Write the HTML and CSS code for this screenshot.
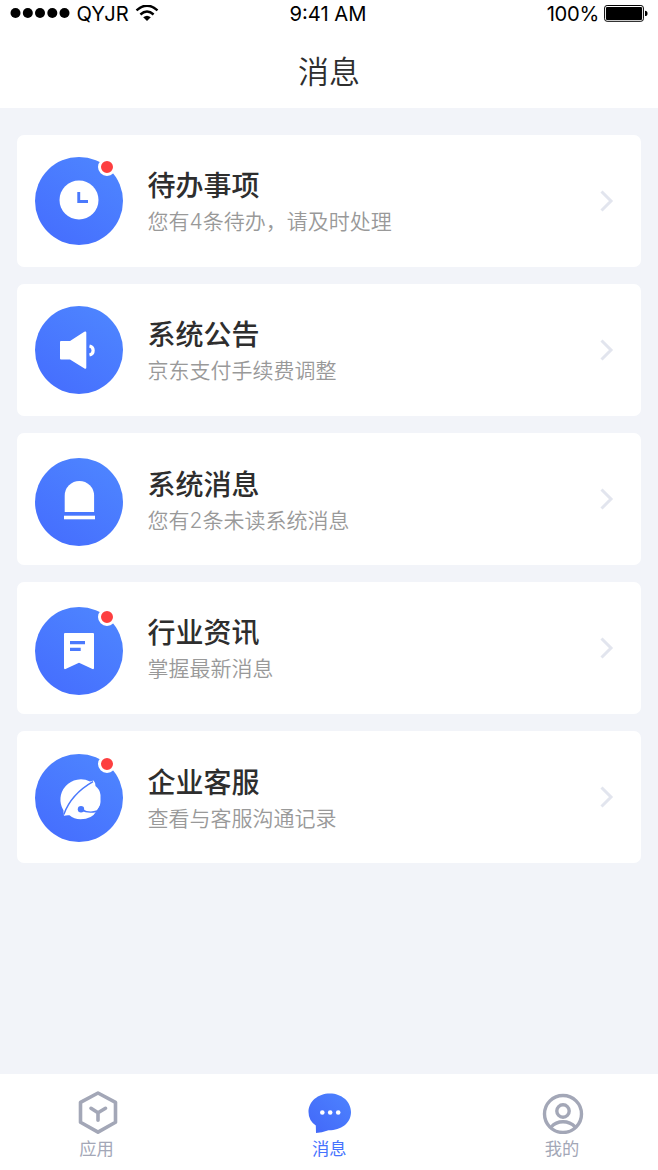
FILE: index.html
```
<!DOCTYPE html>
<html lang="zh-CN">
<head>
    <meta charset="UTF-8">
    <title>消息</title>
    <meta name="viewport" content="width=device-width, initial-scale=1.0">
    <link rel="stylesheet" href="styles.css">
</head>
<body>
    <header>
        <div class="status-bar">
            <div class="status-left">
                <svg width="60" height="12" viewBox="0 0 60 12">
                    <circle cx="5.5" cy="5" r="5"/><circle cx="17.8" cy="5" r="5"/><circle cx="30" cy="5" r="5"/><circle cx="42.3" cy="5" r="5"/><circle cx="54.5" cy="5" r="5"/>
                </svg>
                <span class="carrier">QYJR</span>
                <svg class="wifi" width="24" height="18" viewBox="0 0 24 18">
                    <path d="M1.500 5.300Q12-4 22.500 5.300M5.400 9.500Q12 3.700 18.600 9.500" fill="none" stroke="#000" stroke-width="2.400"/>
                    <path d="M8.200 12.300Q12 9 15.800 12.300L12 16Z"/>
                </svg>
            </div>
            <span class="time">9:41 AM</span>
            <div class="status-right">
                <span class="percent">100%</span>
                <svg width="44" height="18" viewBox="0 0 44 18">
                    <rect x=".6" y=".5" width="38.800" height="15.800" rx="2.500" fill="none" stroke="#000"/>
                    <rect x="2" y="1.900" width="36" height="13" rx="1"/>
                    <path d="M41 5.700Q43.500 5.700 43.500 8.400T41 11.100Z"/>
                </svg>
            </div>
        </div>
        <h1>消息</h1>
    </header>

    <main class="list">
        <a class="card">
            <div class="avatar">
                <svg viewBox="0 0 88 88">
                    <circle cx="44" cy="43" r="19.500" fill="#fff"/>
                    <path d="M42.300 35H45.200V43H53V46H42.300Z" fill="#4a79fd"/>
                </svg>
                <i class="badge"></i>
            </div>
            <div class="info">
                <h2>待办事项</h2>
                <p>您有4条待办，请及时处理</p>
            </div>
            <svg class="arrow" viewBox="0 0 14 22"><path d="M1.500 1.500L11 11L1.500 20.500"/></svg>
        </a>

        <a class="card">
            <div class="avatar">
                <svg viewBox="0 0 88 88">
                    <path d="M26 35H35L49.300 25.700Q51.300 24.800 51.300 26.500V61.500Q51.300 63.300 49.500 62.500L35 53.500H26Q25 53.500 25 52.500V36Q25 35 26 35Z" fill="#fff"/>
                    <path d="M54.500 40A4.600 4.600 0 0 1 54.500 49" fill="none" stroke="#fff" stroke-width="3.200"/>
                </svg>
            </div>
            <div class="info">
                <h2>系统公告</h2>
                <p>京东支付手续费调整</p>
            </div>
            <svg class="arrow" viewBox="0 0 14 22"><path d="M1.500 1.500L11 11L1.500 20.500"/></svg>
        </a>

        <a class="card card-system">
            <div class="avatar">
                <svg viewBox="0 0 88 88" fill="#fff">
                    <path d="M29.700 54V37.700A14.700 14.700 0 0 1 59.100 37.700V54Z"/>
                    <rect x="29" y="57.700" width="31" height="3.600"/>
                </svg>
            </div>
            <div class="info">
                <h2>系统消息</h2>
                <p>您有2条未读系统消息</p>
            </div>
            <svg class="arrow" viewBox="0 0 14 22"><path d="M1.500 1.500L11 11L1.500 20.500"/></svg>
        </a>

        <a class="card card-news">
            <div class="avatar">
                <svg viewBox="0 0 88 88">
                    <path d="M30 26H58Q59 26 59 27V61Q59 62.500 57.500 62L44 55.700L30.500 62Q29 62.500 29 61V27Q29 26 30 26Z" fill="#fff"/>
                    <path d="M35 34H50V37.300H35ZM35 40.700H45.700V44H35Z" fill="#4a79fd"/>
                </svg>
                <i class="badge"></i>
            </div>
            <div class="info">
                <h2>行业资讯</h2>
                <p>掌握最新消息</p>
            </div>
            <svg class="arrow" viewBox="0 0 14 22"><path d="M1.500 1.500L11 11L1.500 20.500"/></svg>
        </a>

        <a class="card card-service">
            <div class="avatar">
                <svg viewBox="0 0 88 88">
                    <path d="M55 27.500L58.500 26.500Q60.500 28.500 60.500 32Q65 35.500 65.500 41V48Q65 53.500 61.500 57Q57 65.300 45.500 65.300Q39 65.300 34.500 61.200Q31 61 29 61.700Q28.300 59 28.500 56.500A20.400 20.400 0 0 1 55 27.500Z" fill="#fff"/>
                    <path d="M28.800 60.500Q36.300 40 58 27.700" fill="none" stroke="#4a79fd" stroke-width="1.500"/>
                    <circle cx="46" cy="55.300" r="3.200" fill="#4a79fd"/>
                    <path d="M46 54.500Q54 59.300 62 56.300L66 50V58L61 58.200Q53 60 46 56.800Z" fill="#4a79fd"/>
                </svg>
                <i class="badge"></i>
            </div>
            <div class="info">
                <h2>企业客服</h2>
                <p>查看与客服沟通记录</p>
            </div>
            <svg class="arrow" viewBox="0 0 14 22"><path d="M1.500 1.500L11 11L1.500 20.500"/></svg>
        </a>
    </main>

    <nav class="tab-bar">
        <a class="tab">
            <svg width="44" height="44" viewBox="0 0 44 44" fill="none" stroke="#a3a7b7" stroke-width="3.600" stroke-linejoin="round" stroke-linecap="round">
                <path d="M23 3L40.500 12.300V32.300L23 42.100L5.500 32.300V12.300Z"/>
                <path d="M16 18.300L23 22.800L30.500 18.300M23 22.800V30.300"/>
            </svg>
            <span>应用</span>
        </a>
        <a class="tab active">
            <svg width="44" height="44" viewBox="0.5 0 44 44">
                <defs>
                    <linearGradient id="bubble" x1="1" y1="0" x2="0" y2="1">
                        <stop offset="0" stop-color="#4d83ff"/>
                        <stop offset="1" stop-color="#4267f8"/>
                    </linearGradient>
                </defs>
                <path d="M9.500 43L9.300 35.500Q2 30.500 2 22C2 11.500 11.500 3.500 23.300 3.500S44.500 11.500 44.500 22C44.500 33.500 34 40.500 22 40.300Q15 42.800 9.500 43Z" fill="url(#bubble)"/>
                <g fill="#fff"><circle cx="15.800" cy="22.500" r="2.300"/><circle cx="23.700" cy="22.500" r="2.300"/><circle cx="31.700" cy="22.500" r="2.300"/></g>
            </svg>
            <span>消息</span>
        </a>
        <a class="tab">
            <svg width="44" height="44" viewBox="0 0 44 44" fill="none" stroke="#a3a7b7" stroke-width="3.400">
                <circle cx="23" cy="24" r="18.500"/>
                <circle cx="23" cy="21" r="6.200"/>
                <path d="M11.200 37Q15.700 31.800 23 31.800T35.200 37"/>
            </svg>
            <span>我的</span>
        </a>
    </nav>
</body>
</html>
```

FILE: styles.css
```
:root {
    --primary-color: #4673fe;
    --light-color: #f2f4f9;
    --text-color: #2e2e2e;
    --muted-color: #999;
    --tab-color: #a3a7b7;
}

* {
    box-sizing: border-box;
}

body {
    display: flex;
    flex-direction: column;
    height: 1170px;
    margin: 0;
    font-family: "Noto Sans CJK SC", sans-serif;
    background-color: var(--light-color);
    color: var(--text-color);
}

header {
    height: 108px;
    background: white;
}

.status-bar {
    display: grid;
    grid-template-columns: 1fr auto 1fr;
    align-items: center;
    height: 27px;
    padding: 1px 10px 0;
    color: #000;
    font-family: Inter, sans-serif;
    font-size: 20.2px;
    line-height: 26px;
}

.status-left,
.status-right {
    display: flex;
    align-items: center;
}

.status-right {
    justify-content: flex-end;
    gap: 5px;
}

.percent {
    letter-spacing: -0.3px;
}

.carrier {
    margin: 0 6px 0 6.5px;
}

.time {
    margin-right: 2px;
}

h1 {
    margin: 20px 0 0;
    font-size: 31px;
    font-weight: 350;
    line-height: 45px;
    text-align: center;
}

.list {
    display: flex;
    flex: 1;
    flex-direction: column;
    gap: 17.5px;
    padding: 27px 17.5px 0 17px;
}

.card {
    display: flex;
    align-items: flex-start;
    height: 131.5px;
    padding: 22px 26.5px 0 18px;
    border-radius: 7px;
    background: white;
}

.avatar {
    position: relative;
    width: 88px;
    height: 88px;
    border-radius: 50%;
    background: linear-gradient(215deg, #4e86ff 5%, #456dfe 95%);
}

.avatar svg {
    display: block;
}

.badge {
    position: absolute;
    top: 1px;
    right: 7px;
    width: 18px;
    height: 18px;
    border: 3.5px solid white;
    border-radius: 50%;
    background: #fd3f40;
}

.info {
    flex: 1;
    margin: 7px 0 0 24.5px;
}

h2 {
    margin: 0;
    font-size: 28px;
    font-weight: 500;
    line-height: 40px;
}

p {
    margin: 0;
    color: var(--muted-color);
    font-family: Inter, "Noto Sans CJK SC", sans-serif;
    font-size: 21px;
    font-weight: 350;
    line-height: 36px;
}

.arrow {
    width: 14px;
    height: 22px;
    margin-top: 33px;
    fill: none;
    stroke: #e2e5ee;
    stroke-width: 3;
}

/* the artwork sits slightly lower in these rows */
.card-system .avatar {
    margin-top: 3px;
}

.card-system .info {
    margin-top: 8px;
}

.card-news .avatar {
    margin-top: 2.6px;
}

.card-service .avatar {
    margin-top: 1px;
}

.card-service .info {
    margin-top: 8px;
}

.tab-bar {
    display: flex;
    justify-content: space-between;
    height: 96.5px;
    padding: 16px 66px 0 66.5px;
    background: white;
}

.tab {
    display: flex;
    flex-direction: column;
    align-items: center;
    width: 60px;
    color: var(--tab-color);
    font-size: 17.3px;
    line-height: 27px;
}

.active {
    color: var(--primary-color);
}
```
